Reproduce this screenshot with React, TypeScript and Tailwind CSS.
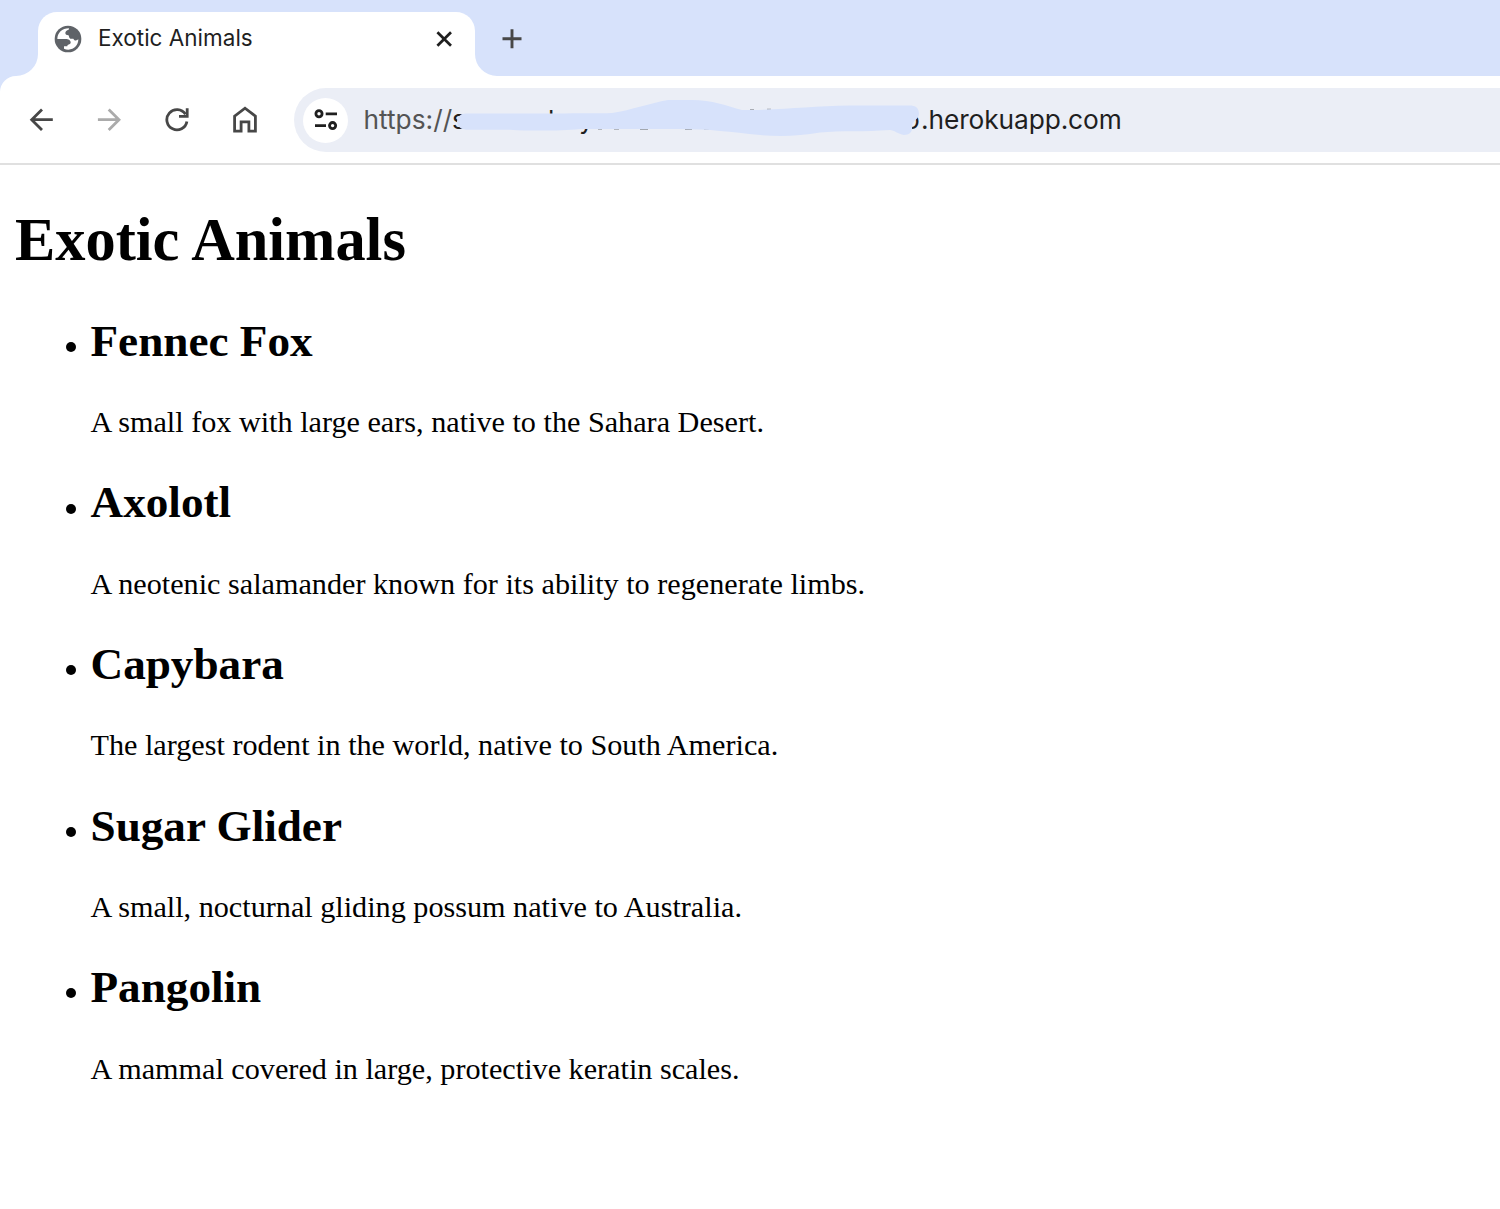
import React from "react";

const animals = [
  { name: "Fennec Fox", text: "A small fox with large ears, native to the Sahara Desert." },
  { name: "Axolotl", text: "A neotenic salamander known for its ability to regenerate limbs." },
  { name: "Capybara", text: "The largest rodent in the world, native to South America." },
  { name: "Sugar Glider", text: "A small, nocturnal gliding possum native to Australia." },
  { name: "Pangolin", text: "A mammal covered in large, protective keratin scales." },
];

function Globe() {
  return (
    <svg className="h-[28px] w-[28px] shrink-0" viewBox="0 0 84 84">
      <circle cx="42" cy="42" r="40" fill="#5f6368" />
      <path
        fill="#fff"
        d="M10 42C10 24 24 10 45 10L44 14C38 15 34 19 34 24C34 29 38 30 43 31C46 32 44 39 49 41H58C61 48 68 48 73 43C73 60 61 74 43 74C38 74 34 73 30 71V64H40C40 57 48 60 50 54C51 46 43 42 35 42Z"
      />
    </svg>
  );
}

function BackArrow() {
  return (
    <svg className="h-[24px] w-[24px]" viewBox="0 0 24 24" fill="none" stroke="currentColor" strokeWidth="2.8">
      <path d="M23.8 11.7H2.9M13 1.4L2.7 11.7l10.3 10.3" />
    </svg>
  );
}

function ForwardArrow() {
  return (
    <svg className="h-[24px] w-[24px]" viewBox="0 0 24 24" fill="none" stroke="currentColor" strokeWidth="2.8">
      <path d="M.9 11.7h20.9M11.7 1.4L22 11.7 11.7 22" />
    </svg>
  );
}

function Reload() {
  return (
    <svg className="h-[24px] w-[24px]" viewBox="0 0 24 24" fill="none" stroke="currentColor" strokeWidth="2.8">
      <path d="M21.9 13.4A10.1 10.1 0 1 1 20.4 6.2M22.2 0.3V8.4H14" />
    </svg>
  );
}

function Home() {
  return (
    <svg className="h-[28px] w-[26px]" viewBox="0 0 26 28" fill="none" stroke="currentColor" strokeWidth="2.8">
      <path d="M2.6 25.1V10.1L13 2.2l10.4 7.9v15h-6.5v-9.2H9.1v9.2z" />
    </svg>
  );
}

function Tune() {
  return (
    <svg className="h-[24px] w-[24px]" viewBox="0 0 24 24" fill="none" stroke="#1f1f1f" strokeWidth="2.8">
      <circle cx="5" cy="5.8" r="3.1" />
      <path d="M11.7 5.8h11.3M1 17.6h11" />
      <circle cx="18.6" cy="17.6" r="3.1" />
    </svg>
  );
}

export default function App() {
  return (
    <div className="min-h-[1209px] w-full overflow-hidden bg-white">
      <header className="bg-[#d7e2fb] font-['Inter',sans-serif]">
        <div className="flex h-[76px] pt-[12px] pl-[38px]">
          <div className="relative flex h-[64px] w-[436.5px] items-start rounded-t-[19px] bg-white pt-[12.5px] pl-[16px]">
            <svg className="absolute bottom-0 -left-[22px] h-[22px] w-[22px]" viewBox="0 0 22 22">
              <path d="M22 0v22H0A22 22 0 0 0 22 0z" fill="#fff" />
            </svg>
            <svg className="absolute -right-[22px] bottom-0 h-[22px] w-[22px]" viewBox="0 0 22 22">
              <path d="M0 0v22h22A22 22 0 0 1 0 0z" fill="#fff" />
            </svg>
            <Globe />
            <span className="-mt-[0.6px] ml-[16px] w-[338px] text-[22.5px] leading-[27px] whitespace-nowrap text-[#1f1f1f]">Exotic Animals</span>
            <svg className="mt-[6px] h-[16px] w-[16px] shrink-0" viewBox="0 0 16 16" stroke="#1f1f1f" strokeWidth="2.7">
              <path d="M1.4 1.2l13.6 13.6M15 1.2L1.4 14.8" />
            </svg>
          </div>
          <svg className="mt-[16.5px] ml-[27.5px] h-[20px] w-[20px]" viewBox="0 0 20 20" stroke="#474747" strokeWidth="2.9">
            <path d="M.5 9.7h19M10 .2v19" />
          </svg>
        </div>
        <div className="flex h-[89px] items-start rounded-tl-[16px] border-b-2 border-[#e0e0e0] bg-white pt-[12px] text-[#474747]">
          <div className="flex h-[64px] w-[294px] shrink-0 items-center pl-[29px]">
            <BackArrow />
            <span className="ml-[44px] text-[#ababab]"><ForwardArrow /></span>
            <span className="ml-[44px]"><Reload /></span>
            <span className="ml-[43px]"><Home /></span>
          </div>
          <div className="relative flex h-[64px] flex-1 items-center rounded-l-full bg-[#ebeef6] pl-[9px]">
            <div className="flex h-[45px] w-[45px] shrink-0 items-center justify-center rounded-full bg-white">
              <Tune />
            </div>
            <div className="ml-[15.5px] flex text-[26.3px] leading-[32px] font-[430] whitespace-nowrap text-[#1f1f1f]">
              <span className="w-[88.5px] text-[#545454]">https://</span>
              <span className="w-[96px]">s</span>
              <span className="w-[31px]">k</span>
              <span className="w-[325px]">y</span>
              <span className="w-[17px]">o</span>
              <span className="tracking-[-0.1px]">.herokuapp.com</span>
            </div>
            <svg className="absolute top-0 left-[156px] h-[64px] w-[480px]" viewBox="450 88 480 64">
              <path d="M598 129.2h4M614 129.2h5M640 129.4h8M685 129.4h7M704 129.2h5M750 109.7h4M767 109.2h4" stroke="#9a9ea6" strokeWidth="1" />
              <path
                fill="#d7e2fb"
                d="M466 113.5H565C585 112.5 600 114 612 113C632 110 650 103 668 100H692C712 100 727 106 742 110C785 110 810 106 850 105.5H909C916 105.5 919 108 919 114C919 119 912 121 912 126C913 132 909 135 904 135C898 134 894 130 890 130C865 132 840 130.5 820 132.5C800 136 780 137 760 135C730 132 710 129 680 129H580C560 131 530 131 510 129.7H466C460 129 457 126 457 121.5C457 117 460 114 466 113.5Z"
              />
            </svg>
          </div>
        </div>
      </header>
      <main className="pt-[41.2px] pl-[15px] font-['Liberation_Serif',serif] text-black">
        <h1 className="text-[60.4px] leading-[68px] font-bold">Exotic Animals</h1>
        <ul className="mt-[40.7px] flex flex-col gap-[37.2px]">
          {animals.map((a) => (
            <li key={a.name} className="pl-[75.5px]">
              <div className="relative">
                <span className="absolute top-[27.2px] -left-[25px] h-[10px] w-[10px] rounded-full bg-black" />
                <h2 className="text-[45.2px] leading-[52px] font-bold">{a.name}</h2>
              </div>
              <p className="mt-[38.4px] text-[30.2px] leading-[34px] whitespace-nowrap">{a.text}</p>
            </li>
          ))}
        </ul>
      </main>
    </div>
  );
}
